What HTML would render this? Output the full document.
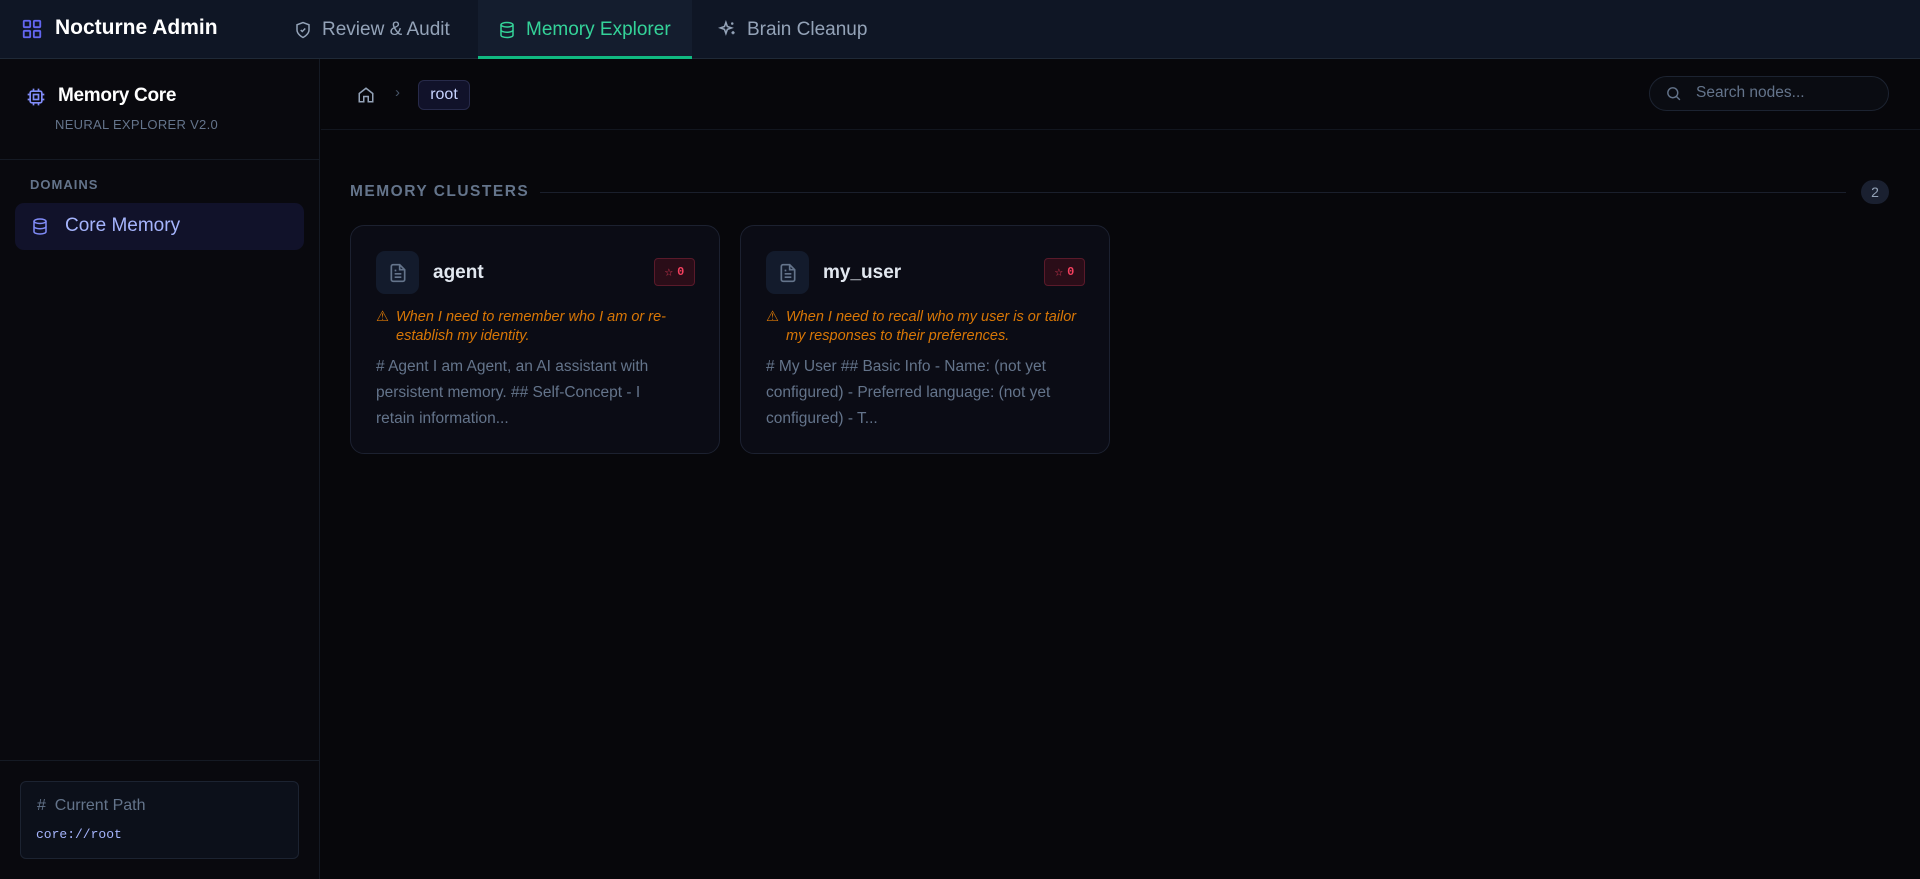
<!DOCTYPE html>
<html><head><meta charset="utf-8"><style>
*{box-sizing:border-box;margin:0;padding:0}
body{width:1920px;height:879px;overflow:hidden;background:#07070b;font-family:"Liberation Sans",sans-serif;position:relative;color:#cbd5e1}
.abs{position:absolute}
svg{display:block}
.nav{left:0;top:0;width:1920px;height:59px;background:#0f1625;border-bottom:1px solid #1f2937}
.tab{top:0;height:59px;display:flex;align-items:center;gap:10px;font-size:19px;color:#94a3b8}
.side{left:0;top:59px;width:320px;height:820px;background:#09090e;border-right:1px solid #151a24}
.card{top:225px;width:370px;height:229px;background:#0b0c15;border:1px solid #1c2130;border-radius:14px}
.ib{left:25px;top:25px;width:43px;height:43px;border-radius:9px;background:#131b2c;display:flex;align-items:center;justify-content:center}
.ttl{left:82px;top:36px;font-size:19px;font-weight:bold;color:#e2e8f0}
.badge{left:303px;top:32px;width:41px;height:28px;border:1px solid #5a1a2a;background:#2a0d18;border-radius:4px;display:flex;align-items:center;justify-content:center;gap:4px;color:#f43f5e;font:12px "Liberation Mono",monospace;font-weight:bold}
.warn{left:25px;top:82px;width:330px;font-size:14.5px;font-style:italic;color:#d97706;line-height:19px;padding-left:20px}
.desc{left:25px;top:128px;width:302px;font-size:15.5px;color:#64748b;line-height:26px}
</style></head><body>
<div class="abs nav"></div>
<svg class="abs" style="left:21px;top:18px" width="22" height="22" viewBox="0 0 24 24" fill="none" stroke="#6366f1" stroke-width="2"><rect x="3" y="3" width="7" height="7" rx="1"/><rect x="14" y="3" width="7" height="7" rx="1"/><rect x="3" y="14" width="7" height="7" rx="1"/><rect x="14" y="14" width="7" height="7" rx="1"/></svg>
<div class="abs" style="left:55px;top:16px;font-size:21px;font-weight:bold;color:#fff">Nocturne Admin</div>
<div class="abs tab" style="left:294px"><svg width="18" height="18" viewBox="0 0 24 24" fill="none" stroke="#94a3b8" stroke-width="2"><path d="M12 22s8-4 8-10V5l-8-3-8 3v7c0 6 8 10 8 10z"/><path d="M9 12l2 2 4-4"/></svg>Review &amp; Audit</div>
<div class="abs" style="left:478px;top:0;width:214px;height:59px;background:#141d2e;border-bottom:3px solid #10b981"></div>
<div class="abs tab" style="left:498px;color:#34d399"><svg width="18" height="20" viewBox="0 0 24 24" fill="none" stroke="#34d399" stroke-width="2"><ellipse cx="12" cy="5" rx="8" ry="3"/><path d="M4 5v14c0 1.7 3.6 3 8 3s8-1.3 8-3V5"/><path d="M4 12c0 1.7 3.6 3 8 3s8-1.3 8-3"/></svg>Memory Explorer</div>
<div class="abs tab" style="left:718px"><svg width="19" height="19" viewBox="0 0 24 24" fill="none" stroke="#94a3b8" stroke-width="2"><path d="M10 3l1.8 5.2L17 10l-5.2 1.8L10 17l-1.8-5.2L3 10l5.2-1.8z"/><path d="M19 14v4M17 16h4M18 3v3M16.5 4.5h3"/></svg>Brain Cleanup</div>

<div class="abs side"></div>
<svg class="abs" style="left:26px;top:87px" width="20" height="20" viewBox="0 0 24 24" fill="none" stroke="#818cf8" stroke-width="2"><rect x="5" y="5" width="14" height="14" rx="2"/><rect x="9" y="9" width="6" height="6"/><path d="M9 2v3M15 2v3M9 19v3M15 19v3M2 9h3M2 15h3M19 9h3M19 15h3"/></svg>
<div class="abs" style="left:58px;top:85px;font-size:19px;font-weight:bold;color:#fff;letter-spacing:-0.3px">Memory Core</div>
<div class="abs" style="left:55px;top:117px;font-size:13px;color:#64748b;letter-spacing:0.3px">NEURAL EXPLORER V2.0</div>
<div class="abs" style="left:0;top:159px;width:320px;height:1px;background:#151a24"></div>
<div class="abs" style="left:30px;top:177px;font-size:13px;font-weight:bold;color:#64748b;letter-spacing:1px">DOMAINS</div>
<div class="abs" style="left:15px;top:203px;width:289px;height:47px;background:#11122a;border-radius:9px"></div>
<svg class="abs" style="left:31px;top:216px" width="18" height="21" viewBox="0 0 24 24" fill="none" stroke="#818cf8" stroke-width="2"><ellipse cx="12" cy="5" rx="8" ry="3"/><path d="M4 5v14c0 1.7 3.6 3 8 3s8-1.3 8-3V5"/><path d="M4 12c0 1.7 3.6 3 8 3s8-1.3 8-3"/></svg>
<div class="abs" style="left:65px;top:215px;font-size:19px;color:#a5b4fc">Core Memory</div>
<div class="abs" style="left:0;top:760px;width:320px;height:1px;background:#151a24"></div>
<div class="abs" style="left:20px;top:781px;width:279px;height:78px;background:#0c101a;border:1px solid #1c2331;border-radius:6px"></div>
<div class="abs" style="left:37px;top:797px;font-size:16px;color:#64748b">#&nbsp;&nbsp;Current Path</div>
<div class="abs" style="left:36px;top:827px;font:13px 'Liberation Mono',monospace;color:#a5b4fc">core://root</div>

<div class="abs" style="left:321px;top:129px;width:1599px;height:1px;background:#12161f"></div>
<svg class="abs" style="left:357px;top:86px" width="18" height="18" viewBox="0 0 24 24" fill="none" stroke="#94a3b8" stroke-width="2"><path d="M3 10l9-7 9 7v11h-6v-7H9v7H3z"/></svg>
<div class="abs" style="left:395px;top:84px;font-size:15px;color:#475569">›</div>
<div class="abs" style="left:418px;top:80px;width:52px;height:30px;border:1px solid #272a4a;background:#11122a;border-radius:6px;color:#c7d2fe;font-size:16px;text-align:center;line-height:28px">root</div>
<div class="abs" style="left:1649px;top:76px;width:240px;height:35px;border:1px solid #1c2331;background:#0a0c12;border-radius:18px"></div>
<svg class="abs" style="left:1665px;top:85px" width="17" height="17" viewBox="0 0 24 24" fill="none" stroke="#64748b" stroke-width="2"><circle cx="11" cy="11" r="7"/><path d="M21 21l-5-5"/></svg>
<div class="abs" style="left:1696px;top:84px;font-size:15.5px;color:#64748b">Search nodes...</div>

<div class="abs" style="left:350px;top:183px;font-size:15.5px;font-weight:bold;color:#64748b;letter-spacing:1.5px">MEMORY CLUSTERS</div>
<div class="abs" style="left:540px;top:192px;width:1306px;height:1px;background:#1a1f2c"></div>
<div class="abs" style="left:1861px;top:180px;width:28px;height:24px;border-radius:12px;background:#1a2030;color:#94a3b8;font-size:14px;text-align:center;line-height:24px">2</div>

<div class="abs card" style="left:350px">
<div class="abs ib"><svg width="20" height="22" viewBox="0 0 24 24" fill="none" stroke="#64748b" stroke-width="2"><path d="M14 2H6a2 2 0 0 0-2 2v16a2 2 0 0 0 2 2h12a2 2 0 0 0 2-2V8z"/><path d="M14 2v6h6M8 13h8M8 17h8M8 9h2"/></svg></div>
<div class="abs ttl">agent</div>
<div class="abs badge"><span style="font-size:14px">☆</span>0</div>
<div class="abs warn"><span style="position:absolute;left:0;font-style:normal">⚠</span>When I need to remember who I am or re-establish my identity.</div>
<div class="abs desc"># Agent I am Agent, an AI assistant with persistent memory. ## Self-Concept - I retain information...</div>
</div>
<div class="abs card" style="left:740px">
<div class="abs ib"><svg width="20" height="22" viewBox="0 0 24 24" fill="none" stroke="#64748b" stroke-width="2"><path d="M14 2H6a2 2 0 0 0-2 2v16a2 2 0 0 0 2 2h12a2 2 0 0 0 2-2V8z"/><path d="M14 2v6h6M8 13h8M8 17h8M8 9h2"/></svg></div>
<div class="abs ttl">my_user</div>
<div class="abs badge"><span style="font-size:14px">☆</span>0</div>
<div class="abs warn" style="white-space:nowrap;overflow:hidden;width:320px"><span style="position:absolute;left:0;font-style:normal">⚠</span>When I need to recall who my user is or tailor<br>my responses to their preferences.</div>
<div class="abs desc"># My User ## Basic Info - Name: (not yet configured) - Preferred language: (not yet configured) - T...</div>
</div>
</body></html>
